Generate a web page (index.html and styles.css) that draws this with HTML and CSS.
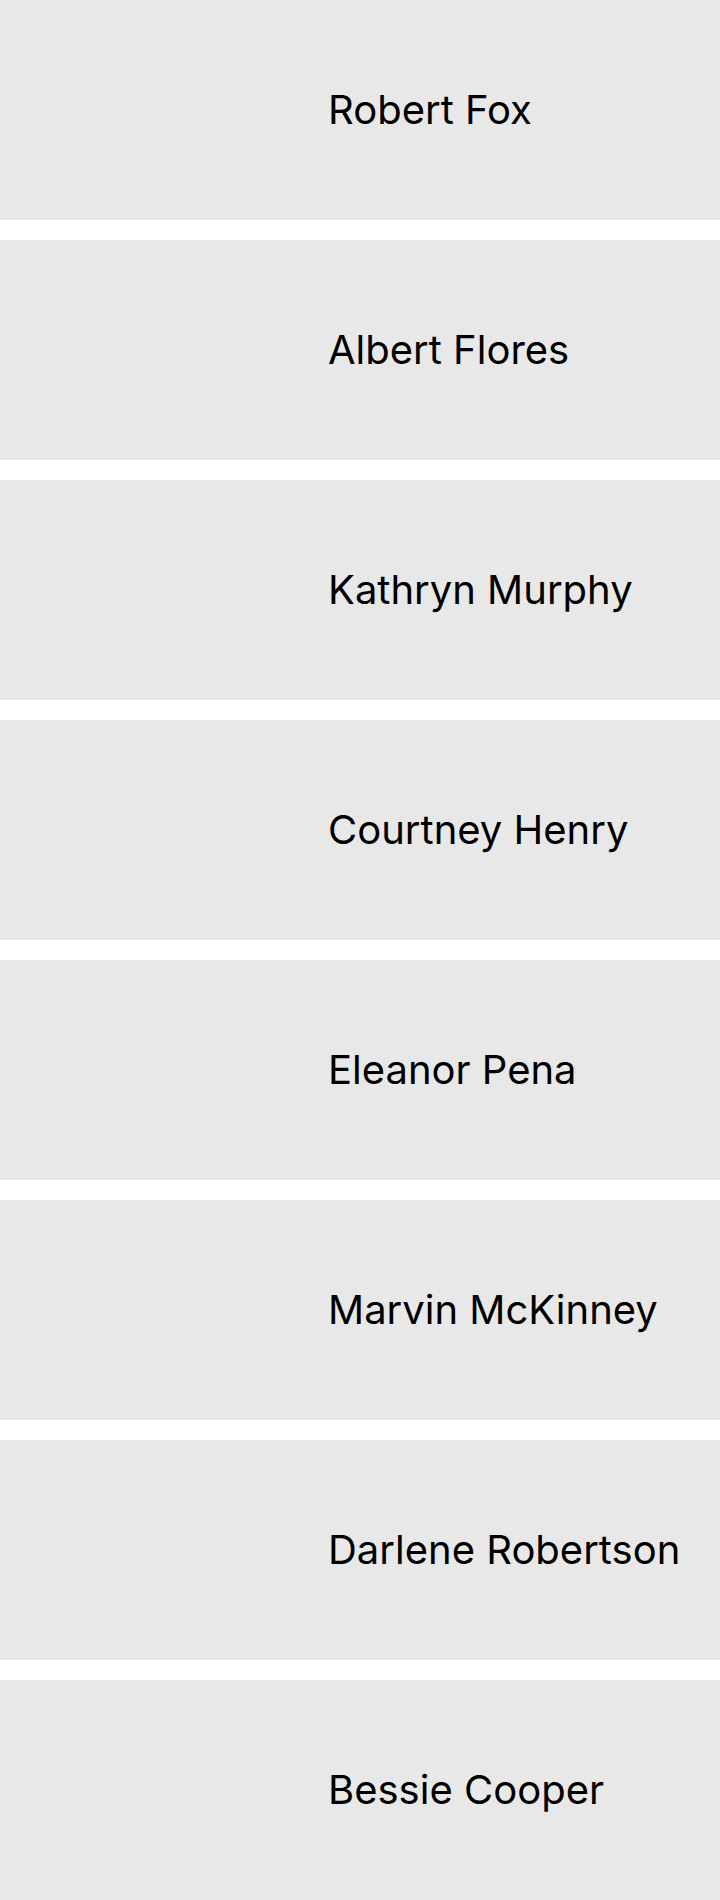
FILE: index.html
```html
<!DOCTYPE html>
<html>
<head>
<meta charset="utf-8">
<link rel="stylesheet" href="styles.css">
</head>
<body>
<ul class="list">
  <li class="card"><div class="thumb"></div><span class="name">Robert Fox</span></li>
  <li class="card"><div class="thumb"></div><span class="name">Albert Flores</span></li>
  <li class="card"><div class="thumb"></div><span class="name">Kathryn Murphy</span></li>
  <li class="card"><div class="thumb"></div><span class="name">Courtney Henry</span></li>
  <li class="card"><div class="thumb"></div><span class="name">Eleanor Pena</span></li>
  <li class="card"><div class="thumb"></div><span class="name">Marvin McKinney</span></li>
  <li class="card"><div class="thumb"></div><span class="name">Darlene Robertson</span></li>
  <li class="card"><div class="thumb"></div><span class="name">Bessie Cooper</span></li>
</ul>
</body>
</html>
```
FILE: styles.css
```css
html, body {
  margin: 0;
  padding: 0;
  background: #ffffff;
}
.list {
  list-style: none;
  margin: 0;
  padding: 0;
  display: flex;
  flex-direction: column;
  gap: 20px;
}
.card {
  display: flex;
  align-items: center;
  height: 220px;
  background: #e8e8e8;
}
.thumb {
  width: 328px;
  height: 100%;
  flex: none;
}
.name {
  font-family: Inter, "Liberation Sans", sans-serif;
  font-size: 40px;
  line-height: 1;
  color: #000000;
  white-space: nowrap;
  margin-bottom: 1px;
}
```
